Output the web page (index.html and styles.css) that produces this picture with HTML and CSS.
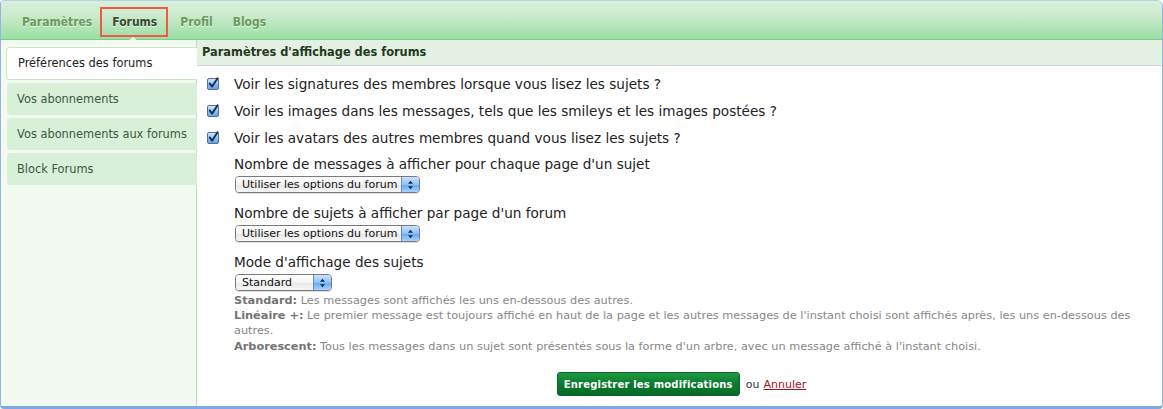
FILE: index.html
```html
<!DOCTYPE html>
<html lang="fr">
<head>
<meta charset="utf-8">
<title>Paramètres d'affichage des forums</title>
<link rel="stylesheet" href="styles.css">
</head>
<body>
<div class="frame">
  <div class="tabs">
    <a class="tab">Paramètres</a>
    <a class="tab active">Forums</a>
    <a class="tab">Profil</a>
    <a class="tab">Blogs</a>
  </div>
  <div class="main">
    <div class="sidebar">
      <a class="side-item current">Préférences des forums</a>
      <a class="side-item">Vos abonnements</a>
      <a class="side-item">Vos abonnements aux forums</a>
      <a class="side-item">Block Forums</a>
    </div>
    <div class="content">
      <div class="section-head">Paramètres d'affichage des forums</div>
      <div class="options">
        <div class="check-row">
          <svg class="cb" width="13" height="13" viewBox="0 0 13 13"><defs><linearGradient id="cbg" x1="0" y1="0" x2="0" y2="1"><stop offset="0" stop-color="#d6ecff"/><stop offset="0.5" stop-color="#8cc2f4"/><stop offset="1" stop-color="#5aa2ea"/></linearGradient></defs><rect x="0.5" y="1.5" width="11" height="11" rx="1.5" fill="url(#cbg)" stroke="#5a6f8c"/><path d="M2.8 6.6 L5.2 9.6 L10.6 1.2" fill="none" stroke="#1d2a4a" stroke-width="1.9" stroke-linecap="round" stroke-linejoin="round"/></svg>
          <span>Voir les signatures des membres lorsque vous lisez les sujets ?</span>
        </div>
        <div class="check-row">
          <svg class="cb" width="13" height="13" viewBox="0 0 13 13"><rect x="0.5" y="1.5" width="11" height="11" rx="1.5" fill="url(#cbg)" stroke="#5a6f8c"/><path d="M2.8 6.6 L5.2 9.6 L10.6 1.2" fill="none" stroke="#1d2a4a" stroke-width="1.9" stroke-linecap="round" stroke-linejoin="round"/></svg>
          <span>Voir les images dans les messages, tels que les smileys et les images postées ?</span>
        </div>
        <div class="check-row">
          <svg class="cb" width="13" height="13" viewBox="0 0 13 13"><rect x="0.5" y="1.5" width="11" height="11" rx="1.5" fill="url(#cbg)" stroke="#5a6f8c"/><path d="M2.8 6.6 L5.2 9.6 L10.6 1.2" fill="none" stroke="#1d2a4a" stroke-width="1.9" stroke-linecap="round" stroke-linejoin="round"/></svg>
          <span>Voir les avatars des autres membres quand vous lisez les sujets ?</span>
        </div>

        <div class="field">
          <div class="field-label">Nombre de messages à afficher pour chaque page d'un sujet</div>
          <div class="select wide"><span class="sel-text">Utiliser les options du forum</span><span class="sel-btn"><svg width="7" height="10" viewBox="0 0 7 10"><path d="M3.5 0.8 L6 3.8 H1 Z M3.5 9.2 L6 6.2 H1 Z" fill="#1b2a40"/></svg></span></div>
        </div>
        <div class="field">
          <div class="field-label">Nombre de sujets à afficher par page d'un forum</div>
          <div class="select wide"><span class="sel-text">Utiliser les options du forum</span><span class="sel-btn"><svg width="7" height="10" viewBox="0 0 7 10"><path d="M3.5 0.8 L6 3.8 H1 Z M3.5 9.2 L6 6.2 H1 Z" fill="#1b2a40"/></svg></span></div>
        </div>
        <div class="field">
          <div class="field-label">Mode d'affichage des sujets</div>
          <div class="select narrow"><span class="sel-text">Standard</span><span class="sel-btn"><svg width="7" height="10" viewBox="0 0 7 10"><path d="M3.5 0.8 L6 3.8 H1 Z M3.5 9.2 L6 6.2 H1 Z" fill="#1b2a40"/></svg></span></div>
          <div class="explain">
            <p><b>Standard:</b> <span>Les messages sont affichés les uns en-dessous des autres.</span></p>
            <p><b>Linéaire +:</b> <span>Le premier message est toujours affiché en haut de la page et les autres messages de l'instant choisi sont affichés après, les uns en-dessous des</span><br><span>autres.</span></p>
            <p><b>Arborescent:</b> <span>Tous les messages dans un sujet sont présentés sous la forme d'un arbre, avec un message affiché à l'instant choisi.</span></p>
          </div>
        </div>
      </div>
      <div class="actions">
        <button class="save">Enregistrer les modifications</button>
        <span class="or">ou</span>
        <a class="cancel">Annuler</a>
      </div>
    </div>
  </div>
</div>
</body>
</html>
```

FILE: styles.css
```css
* { box-sizing: border-box; }
html, body { margin: 0; padding: 0; background: #fff; }
body { font-family: "DejaVu Sans", "Liberation Sans", sans-serif; }

.frame {
  width: 1163px;
  height: 409px;
  border: 1px solid #8fb6e6;
  border-top-color: #b9cfe9;
  border-bottom: 3px solid #7eaae3;
  border-radius: 4px 6px 4px 4px;
  display: flex;
  flex-direction: column;
  overflow: hidden;
}

.tabs {
  height: 39px;
  flex: none;
  display: flex;
  align-items: flex-end;
  padding: 0 0 2px 11px;
  background: linear-gradient(#d8f0d9, #cdebcf 35%, #9adfa3);
  border-bottom: 1px solid #77cf85;
}
.tab {
  font-family: "DejaVu Sans Condensed", "DejaVu Sans", sans-serif;
  font-stretch: condensed;
  font-weight: bold;
  font-size: 12px;
  color: #6c9a5c;
  text-shadow: 0 1px 0 rgba(255,255,255,0.7);
  padding: 0 10px;
  height: 30px;
  line-height: 31px;
  letter-spacing: 0;
  position: relative;
}
.tab.active {
  color: #3b4a33;
  border: 2px solid #f05a44;
  line-height: 27px;
  padding: 0 9px 0 10px;
  margin-left: -2px;
  margin-right: 2px;
}
.tab.active::after {
  content: "";
  position: absolute;
  left: 50%;
  bottom: -6px;
  margin-left: -6px;
  border-left: 5px solid transparent;
  border-right: 5px solid transparent;
  border-bottom: 4px solid #f2faf0;
}

.main {
  flex: 1;
  display: flex;
  min-height: 0;
}

.sidebar {
  width: 196px;
  flex: none;
  background: #f2faf2;
  border-right: 1px solid #b8e0b8;
  padding: 7px 0 0 5px;
  display: flex;
  flex-direction: column;
  gap: 3px;
}
.side-item {
  display: block;
  height: 32px;
  line-height: 32px;
  padding-left: 10px;
  font-size: 11.4px;
  color: #3c5a3a;
  background: #d8efd8;
  border-radius: 4px 0 0 4px;
  margin-left: 1px;
  margin-right: -1px;
  white-space: nowrap;
}
.side-item.current {
  height: 33px;
  line-height: 31px;
  margin-left: 0;
  background: #fff;
  border: 1px solid #c9e5c9;
  border-right: none;
  color: #222;
  padding-left: 11px;
}

.content {
  flex: 1;
  display: flex;
  flex-direction: column;
  min-width: 0;
}
.section-head {
  height: 26px;
  flex: none;
  background: #e3f0e3;
  border-bottom: 1px solid #cbd8cb;
  font-weight: bold;
  font-size: 11.4px;
  color: #1f3a1f;
  padding-left: 5px;
  line-height: 24px;
}

.options {
  padding: 4px 0 0 10px;
}
.check-row {
  display: flex;
  align-items: center;
  height: 27px;
  font-size: 13.6px;
  color: #222;
}
.check-row .cb {
  margin-right: 14px;
  flex: none;
}

.field {
  margin-left: 27px;
  margin-top: 5px;
}
.field + .field { margin-top: 12px; }
.field-label {
  font-size: 13.6px;
  color: #222;
  line-height: 17px;
}
.select {
  display: flex;
  height: 17px;
  margin-top: 3px;
  margin-left: 1px;
  border: 1px solid #7a7a7a;
  border-radius: 4px;
  overflow: hidden;
  box-shadow: 0 1px 1px rgba(0,0,0,0.15);
}
.select.wide { width: 185px; }
.select.narrow { width: 97px; }
.sel-text {
  flex: 1;
  font-size: 11px;
  line-height: 15px;
  padding-left: 6px;
  color: #111;
  background: linear-gradient(#ffffff, #f4f4f4 50%, #e6e6e6 51%, #f6f6f6);
  white-space: nowrap;
  overflow: hidden;
}
.sel-btn {
  width: 18px;
  flex: none;
  display: flex;
  align-items: center;
  justify-content: center;
  border-left: 1px solid #6b8bbd;
  background: linear-gradient(#c8e2ff, #8fc1f7 50%, #64a7f0 51%, #a5d3ff);
}

.explain {
  margin-top: 2px;
  font-size: 11.3px;
  line-height: 15.2px;
  color: #878787;
  padding-right: 12px;
}
.explain p { margin: 0; }
.explain b { color: #747474; }

.actions {
  margin-top: auto;
  padding-bottom: 10px;
  display: flex;
  justify-content: center;
  align-items: center;
  gap: 6px;
  padding-left: 4px;
}
.save {
  height: 24px;
  width: 183px;
  border: 1px solid #0c6428;
  border-radius: 3px;
  background: linear-gradient(#1f9a43, #0a7a2f 50%, #066a27);
  color: #fff;
  font-family: "DejaVu Sans", sans-serif;
  font-weight: bold;
  font-size: 10px;
  letter-spacing: 0.2px;
  padding: 0;
}
.or {
  font-size: 11px;
  color: #333;
}
.cancel {
  font-size: 11px;
  color: #a8101a;
  text-decoration: underline;
  margin-left: -2px;
}
```
